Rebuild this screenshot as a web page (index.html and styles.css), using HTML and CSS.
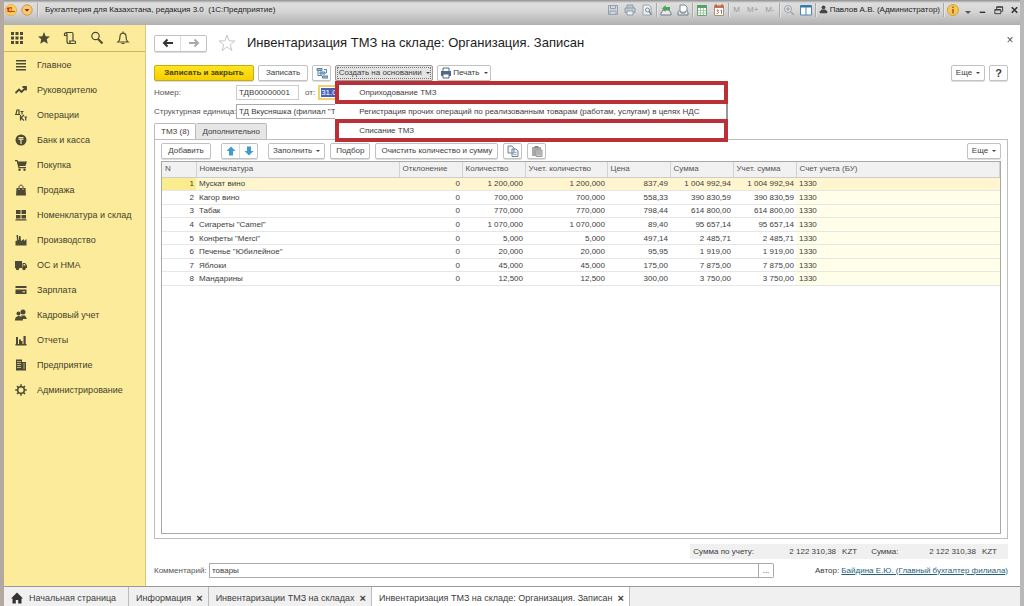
FILE: index.html
```html
<!DOCTYPE html>
<html lang="ru">
<head>
<meta charset="utf-8">
<title>Бухгалтерия для Казахстана</title>
<link rel="stylesheet" href="styles.css">
</head>
<body>
<svg class="defs" aria-hidden="true">
  <symbol id="arrow" viewBox="0 0 12 10"><path d="M11 5H2M5.500 1.500 2 5l3.500 3.500" fill="none" stroke="currentColor" stroke-width="2"/></symbol>
  <symbol id="copy" viewBox="0 0 12 12"><path d="M1 1h4l2 2v5H1zM5 4h4l2 2v5.500H5z" fill="#eef3f6" stroke="#71869a"/><path d="M6.500 7.500h3M6.500 9.500h3" stroke="#9eb0bf"/></symbol>
</svg>
<div class="window">
  <header class="titlebar">
    <svg class="logo" viewBox="0 0 12 12"><circle cx="6" cy="6" r="5.500" fill="#fbd35c" stroke="#e9b040"/><path d="M2 5l1-1v4M7 4.500a2 2 0 1 0-.5 3H10M7 6H5.500" fill="none" stroke="#cf3a20" stroke-width="1.200"/></svg>
    <svg class="logo" viewBox="0 0 12 12"><circle cx="6" cy="6" r="5.200" fill="#fbc877" stroke="#d9953a"/><path d="M3.500 5h5L6 7.800z" fill="#6b4316"/></svg>
    <i class="sep"></i>
    <span class="app-title">Бухгалтерия для Казахстана, редакция 3.0&nbsp; (1С:Предприятие)</span>
    <div class="sys">
      <svg viewBox="0 0 12 12"><path d="M1.500 1.500h9v9h-9zM3.500 1.500v3h5v-3M3 10.500V7h6v3.500" fill="#cfd6de" stroke="#94a0ae"/></svg>
      <svg viewBox="0 0 12 12"><path d="M3 4V1h6v3M1 4h10v4.500H1z" fill="#bfc9d3" stroke="#8f9dab"/><path d="M3 7h6v4H3z" fill="#edf1f4" stroke="#8f9dab"/></svg>
      <svg viewBox="0 0 12 12"><path d="M2 1h6l2 2v8H2z" fill="#eceff2" stroke="#98a3ae"/><circle cx="6.500" cy="6" r="2" fill="none" stroke="#7e8b99"/><path d="M8 7.500l2.500 3" stroke="#7e8b99" stroke-width="1.500"/></svg>
      <i class="sep"></i>
      <svg viewBox="0 0 12 12"><path d="M1 9l2-3h6l2 3v2H1z" fill="#e6e9eb" stroke="#6f7b86"/><path d="M2 4.500L5.500 1v2H10v3H5.500v2z" fill="#49a54f"/></svg>
      <svg viewBox="0 0 12 12"><path d="M3 7V1h5l2 2v4" fill="#fff" stroke="#77889a"/><path d="M1 9c0-3 3-3 3 0h4c0-3 3-3 3 0v2H1z" fill="#e6e9eb" stroke="#6f7b86"/></svg>
      <i class="sep"></i>
      <svg viewBox="0 0 12 12"><path d="M1.500 1.500h9v10h-9z" fill="#fff" stroke="#6aa574"/><path d="M1 1h10v3H1z" fill="#56a361"/><path d="M2 6.500h8M2 9h8M4.500 4v7M7.500 4v7" stroke="#a7c9ac"/></svg>
      <svg viewBox="0 0 12 12"><path d="M1.500 2h9v9.500h-9z" fill="#fff" stroke="#b28b70"/><path d="M1 1.500h10V4H1z" fill="#cf7145"/><path d="M3 0v3M9 0v3" stroke="#8c654b"/><path d="M3.500 6h2L4.500 7.500c2 0 1 2.500-1 2M7.500 6.500l1-.5v4" fill="none" stroke="#666" stroke-width=".8"/></svg>
      <i class="sep"></i>
      <button class="mem">M</button><button class="mem">M+</button><button class="mem">M-</button>
      <i class="sep"></i>
      <svg viewBox="0 0 12 12"><circle cx="5" cy="5" r="3.500" fill="#e2e5e7" stroke="#99a2aa"/><path d="M3 5h4M5 3v4M8 8l3 3" stroke="#99a2aa" stroke-width="1.200"/></svg>
      <svg viewBox="0 0 12 12"><path d="M.5 1.500h11v9.500H.5z" fill="#fff" stroke="#4a87b5"/><path d="M.5 2.500h11" stroke="#2f78b0" stroke-width="2"/><path d="M6 3v8" stroke="#4a87b5"/></svg>
      <i class="sep"></i>
      <span class="user"><svg viewBox="0 0 12 12"><circle cx="6" cy="3" r="2.500" fill="#444"/><path d="M3.500 6h5L11 8.500V11H1V8.500z" fill="#444"/></svg>Павлов А.В. (Администратор)</span>
      <i class="sep"></i>
      <svg viewBox="0 0 12 12"><circle cx="6" cy="6" r="5.500" fill="#f7c653" stroke="#d8a13c"/><path d="M6 5v4.500M6 2.500v1.500" stroke="#8a6420" stroke-width="1.500"/></svg>
      <svg class="tiny" viewBox="0 0 8 12"><path d="M1 7h6L4 10z" fill="#555"/></svg>
      <svg class="win" viewBox="0 0 12 12"><path d="M3 8.500h6" stroke="#333" stroke-width="1.500"/></svg>
      <svg class="win" viewBox="0 0 12 12"><path d="M2 5.500h6.500V10H2zM4 5V2.500h6.500v5H9M4 3h6.500M2 6h6" fill="none" stroke="#333"/></svg>
      <svg class="win" viewBox="0 0 12 12"><path d="M3 3l6 6M9 3l-6 6" stroke="#333" stroke-width="1.800"/></svg>
    </div>
  </header>

  <div class="body">
    <aside class="sidebar">
      <div class="quick">
        <svg viewBox="0 0 14 14"><path d="M1 1h3v3H1zM5.500 1h3v3h-3zM10 1h3v3h-3zM1 5.500h3v3H1zM5.500 5.500h3v3h-3zM10 5.500h3v3h-3zM1 10h3v3H1zM5.500 10h3v3h-3zM10 10h3v3h-3z"/></svg>
        <svg viewBox="0 0 14 14"><path d="M7 1l1.700 4.200 4.300.3-3.300 2.800 1.100 4.500L7 10.400l-3.800 2.400 1.100-4.500L1 5.500l4.300-.3z"/></svg>
        <svg class="line" viewBox="0 0 14 14"><path d="M4 4.500H1.500V3c0-1.500 2.500-1.500 2.500 0v7.500c0 2 2 2 2 2h5.500c1.500 0 1.500-2.500 0-2.500H10V3c0-1.500-1-1.500-1-1.500H3M6 12.500c1.500 0 1.500-2.500 0-2.500h4"/></svg>
        <svg class="line" viewBox="0 0 14 14"><circle cx="5.500" cy="5" r="3.700"/><path d="M8 8l4.500 4.500" stroke-width="2"/></svg>
        <svg class="line" viewBox="0 0 14 14"><path d="M2 11h10c-2-1.500-2-3-2-5.500C10 1 4 1 4 5.500 4 8 4 9.500 2 11zM5.500 12.500h3M7 2V.5"/></svg>
      </div>
      <nav class="menu">
        <a href="#"><svg viewBox="0 0 12 12"><path d="M1 1h10v1.500H1zM1 4h10v1.500H1zM1 7h10v1.500H1zM1 10h10v1.500H1z"/></svg>Главное</a>
        <a href="#"><svg class="line" viewBox="0 0 12 12"><path d="M.5 9l3.500-3.500L6.500 8 11 3.500M7.500 3H11v3.500" stroke-width="1.800"/></svg>Руководителю</a>
        <a href="#"><svg class="line" viewBox="0 0 12 12"><path d="M0 5.500h5M1 5l1-4h2v4M5.500 2.500h3M7 2.500v3M5.500 6v5.500M9 6l-3 3 3 2.500M9.500 8H12M10.700 8v3.500"/></svg>Операции</a>
        <a href="#"><svg viewBox="0 0 12 12"><circle cx="6" cy="6" r="5.500"/><path d="M3.500 3.500h5M3.500 5.200h5M6 5v5" stroke="#fbeb9a" stroke-width="1.200"/></svg>Банк и касса</a>
        <a href="#"><svg viewBox="0 0 12 12"><path d="M0 1h2.500l.5 1.500h9L10.500 7H4.300l.3 1H11v1.200H3.500L1.700 2.200H0z"/><circle cx="4.500" cy="10.700" r="1.200"/><circle cx="9.500" cy="10.700" r="1.200"/></svg>Покупка</a>
        <a href="#"><svg viewBox="0 0 12 12"><path d="M1.500 4h9l.5 7.500H1z"/><path d="M4 6V3c0-2.500 4-2.500 4 0v3" fill="none" stroke="#4c4935"/><path d="M4 4.500V6M8 4.500V6" stroke="#fbeb9a" stroke-width=".8"/></svg>Продажа</a>
        <a href="#"><svg viewBox="0 0 12 12"><path d="M1 1h4.500v4H1zM6.500 1H11v4H6.500zM1 6h4.500v3.500H1zM6.500 6H11v3.500H6.500zM.5 10.200h11v1.300H.5z"/></svg>Номенклатура и склад</a>
        <a href="#"><svg viewBox="0 0 12 12"><path d="M.5 11.500V7L2 6.500 1.500 1H3l.5 5L4 6V2h1.500l.5 5 3-2v2l2.500-2v6.500z"/></svg>Производство</a>
        <a href="#"><svg viewBox="0 0 12 12"><path d="M0 2h7v7H0zM7.500 4h2.700L12 6.500V9H7.500z"/><circle cx="2.500" cy="9.500" r="1.700"/><circle cx="9" cy="9.500" r="1.700"/><path d="M8.500 5h1.200l1 1.500H8.500z" fill="#fbeb9a"/></svg>ОС и НМА</a>
        <a href="#"><svg viewBox="0 0 12 12"><path d="M.5 2h11v2H.5zM.5 5.500h11V10H.5z"/><path d="M7.500 7.800H10" stroke="#fbeb9a"/></svg>Зарплата</a>
        <a href="#"><svg viewBox="0 0 12 12"><circle cx="8" cy="3" r="2.500"/><circle cx="3.500" cy="4.500" r="2"/><path d="M6 6.500h4L12 10H8zM0 11.500C0 7 3 7.500 4 7c3 .5 4 1 4 4.500z"/></svg>Кадровый учет</a>
        <a href="#"><svg viewBox="0 0 12 12"><path d="M1 3h2v7.500H1zM4 5.500h2v5H4zM8.500 2h2.200v8.500H8.500zM6 7h1.500v3.500H6zM.5 10h11v1.500H.5z"/></svg>Отчеты</a>
        <a href="#"><svg viewBox="0 0 12 12"><path d="M1 .5h6V3h4v8.500H1z"/><path d="M2 2.500h4M2 4.500h4M2 6.500h4M2 8.500h4M8 5h2M8 7h2M8 9h2" stroke="#d8ca85" stroke-width=".8"/></svg>Предприятие</a>
        <a href="#"><svg class="line" viewBox="0 0 12 12"><circle cx="6" cy="6" r="3.300" stroke-width="1.500"/><path d="M6 .3v2.200M6 9.500v2.200M.3 6h2.200M9.500 6h2.200M2 2l1.500 1.500M8.500 8.500L10 10M10 2L8.500 3.500M3.500 8.500L2 10" stroke-width="1.500"/></svg>Администрирование</a>
      </nav>
    </aside>

    <main class="form">
      <div class="heading">
        <div class="pair nav"><button aria-label="Назад"><svg><use href="#arrow"/></svg></button><button class="fwd" aria-label="Вперед"><svg><use href="#arrow"/></svg></button></div>
        <svg class="star" viewBox="0 0 18 18"><path d="M9 1l2 5.800 6 .2-4.800 3.700L14 16.500 9 13l-5 3.500 1.800-5.800L1 7l6-.2z" fill="#fff" stroke="#c3c8cd"/></svg>
        <h1>Инвентаризация ТМЗ на складе: Организация. Записан</h1>
        <button class="close" aria-label="Закрыть">×</button>
      </div>

      <div class="commands">
        <button class="btn primary">Записать и закрыть</button>
        <button class="btn">Записать</button>
        <button class="btn icon" aria-label="Структура"><svg viewBox="0 0 12 12"><path d="M1 1.500h5v2H1zM4 5h5v2H4zM6.500 9H12v2H6.500z" fill="#a9c7dc" stroke="#4f7fa5"/><path d="M2 4v4.500h4M8 2.500h2.500V6" fill="none" stroke="#4f7fa5"/></svg></button>
        <div class="dropdown">
          <button class="btn pressed">Создать на основании<i class="caret"></i></button>
          <div class="popup">
            <button class="marked">Оприходование ТМЗ</button>
            <button>Регистрация прочих операций по реализованным товарам (работам, услугам) в целях НДС</button>
            <button class="marked">Списание ТМЗ</button>
          </div>
        </div>
        <button class="btn print"><svg viewBox="0 0 12 12"><path d="M3 4V1h6v3" fill="#fff" stroke="#4e6b85"/><path d="M1 4h10v5H1z" fill="#4e6b85"/><path d="M3 7h6v4H3z" fill="#fff" stroke="#4e6b85"/></svg>Печать<i class="caret"></i></button>
        <button class="btn more push">Еще<i class="caret"></i></button>
        <button class="btn icon help">?</button>
      </div>

      <div class="fields">
        <label for="num">Номер:</label>
        <div class="line-fields"><input id="num" class="number" value="ТДВ00000001"><label for="date">от:</label><input id="date" class="date" value="31.0"></div>
        <label for="unit">Структурная единица:</label>
        <input id="unit" class="unit" value="ТД Вкусняшка (филиал &quot;Т,">
      </div>

      <div class="tabs"><button class="tab active">ТМЗ (8)</button><button class="tab">Дополнительно</button></div>

      <section class="panel">
        <div class="tools">
          <button class="btn add">Добавить</button>
          <div class="pair move"><button aria-label="Вверх"><svg viewBox="0 0 10 10"><path d="M5 .5L9.500 5H7v4.500H3V5H.5z" fill="#3f9bd2"/></svg></button><button aria-label="Вниз"><svg viewBox="0 0 10 10"><path d="M5 9.500L.5 5H3V.5h4V5h2.500z" fill="#3f9bd2"/></svg></button></div>
          <button class="btn fill">Заполнить<i class="caret"></i></button>
          <button class="btn pick">Подбор</button>
          <button class="btn clear">Очистить количество и сумму</button>
          <button class="btn icon" aria-label="Копировать"><svg><use href="#copy"/></svg></button>
          <button class="btn icon" aria-label="Вставить"><svg viewBox="0 0 12 12"><path d="M1 2h9v9H1z" fill="#aaa"/><path d="M3.500 1h4v2h-4z" fill="#888"/><path d="M5 5h6v6.500H5z" fill="#ccc" stroke="#999"/><path d="M6 7h4M6 9h4" stroke="#999"/></svg></button>
          <button class="btn more push">Еще<i class="caret"></i></button>
        </div>
        <div class="grid">
          <table>
            <colgroup><col class="c-n"><col class="c-name"><col class="c-mid"><col class="c-mid"><col class="c-wide"><col class="c-mid"><col class="c-mid"><col class="c-mid"><col></colgroup>
            <thead><tr><th>N</th><th>Номенклатура</th><th>Отклонение</th><th>Количество</th><th>Учет. количество</th><th>Цена</th><th>Сумма</th><th>Учет. сумма</th><th>Счет учета (БУ)</th></tr></thead>
            <tbody>
              <tr class="current"><td>1</td><td>Мускат вино</td><td>0</td><td>1 200,000</td><td>1 200,000</td><td>837,49</td><td>1 004 992,94</td><td>1 004 992,94</td><td>1330</td></tr>
              <tr><td>2</td><td>Кагор вино</td><td>0</td><td>700,000</td><td>700,000</td><td>558,33</td><td>390 830,59</td><td>390 830,59</td><td>1330</td></tr>
              <tr><td>3</td><td>Табак</td><td>0</td><td>770,000</td><td>770,000</td><td>798,44</td><td>614 800,00</td><td>614 800,00</td><td>1330</td></tr>
              <tr><td>4</td><td>Сигареты "Camel"</td><td>0</td><td>1 070,000</td><td>1 070,000</td><td>89,40</td><td>95 657,14</td><td>95 657,14</td><td>1330</td></tr>
              <tr><td>5</td><td>Конфеты "Merci"</td><td>0</td><td>5,000</td><td>5,000</td><td>497,14</td><td>2 485,71</td><td>2 485,71</td><td>1330</td></tr>
              <tr><td>6</td><td>Печенье "Юбилейное"</td><td>0</td><td>20,000</td><td>20,000</td><td>95,95</td><td>1 919,00</td><td>1 919,00</td><td>1330</td></tr>
              <tr><td>7</td><td>Яблоки</td><td>0</td><td>45,000</td><td>45,000</td><td>175,00</td><td>7 875,00</td><td>7 875,00</td><td>1330</td></tr>
              <tr><td>8</td><td>Мандарины</td><td>0</td><td>12,500</td><td>12,500</td><td>300,00</td><td>3 750,00</td><td>3 750,00</td><td>1330</td></tr>
            </tbody>
          </table>
        </div>
      </section>

      <div class="totals"><span>Сумма по учету:</span><b>2 122 310,38</b><b>KZT</b><span class="second">Сумма:</span><b>2 122 310,38</b><b>KZT</b></div>

      <div class="footer">
        <label for="comment">Комментарий:</label>
        <input id="comment" value="товары"><button class="dots">...</button>
        <span class="author">Автор: <a href="#">Байдина Е.Ю. (Главный бухгалтер филиала)</a></span>
      </div>
    </main>
  </div>

  <nav class="taskbar">
    <a class="home" href="#"><svg viewBox="0 0 12 12"><path d="M6 .5L12 6.500h-1.500v5H7.200V8H4.800v3.500H1.500v-5H0z" fill="#333"/></svg>Начальная страница</a>
    <a href="#">Информация<b>×</b></a>
    <a href="#">Инвентаризации ТМЗ на складах<b>×</b></a>
    <a class="open" href="#">Инвентаризация ТМЗ на складе: Организация. Записан<b>×</b></a>
  </nav>
</div>
</body>
</html>
```
FILE: styles.css
```css
* { box-sizing: border-box; }
body { margin: 0; font: 8px/12px "Liberation Sans", Arial, sans-serif; color: #3d3d3d; background: #fff; }
button, input { font: inherit; color: inherit; margin: 0; padding: 0; }
button { background: none; border: 0; white-space: nowrap; }
a { color: inherit; text-decoration: none; }
svg { width: 12px; height: 12px; flex: none; }
.defs { display: none; }
.window { min-height: 100vh; display: flex; flex-direction: column; border-left: 4px solid #b3a9a0; border-right: 4px solid #b8b8b8; background: #f0f0f0; }

.titlebar { height: 25px; padding: 0 0 6px 1px; display: flex; align-items: center; gap: 4px; background: linear-gradient(#8e8e8e, #dedede 12%, #d6d6d6 45%, #b0b0b0); }
.sep { width: 1px; height: 14px; background: #aaa; box-shadow: 1px 0 #e4e4e4; }
.app-title { padding-left: 2px; color: #222; white-space: nowrap; }
.logo + .sep { margin-right: 1px; }
.sys { margin-left: auto; display: flex; align-items: center; gap: 5px; }
.sys .sep { margin: 0 -2px; }
.sys .tiny { width: 8px; }
.sys .win { width: 11px; }
.mem { padding: 0 1px; color: #999; }
.user { display: flex; align-items: center; gap: 2px; color: #222; white-space: nowrap; }
.user svg { width: 9px; height: 9px; }

.body { flex: 1; display: flex; }
.sidebar { width: 142px; background: #fbeb9a; border-right: 1px solid #d9c97c; }
.sidebar svg { fill: #4c4935; }
.sidebar .line { fill: none; stroke: #4c4935; stroke-width: 1.2; }
.quick { height: 27px; padding: 0 15px 0 6px; display: flex; align-items: center; justify-content: space-between; border-bottom: 1px solid #c9b85c; }
.quick svg { width: 14px; height: 14px; }
.menu { font-size: 9px; color: #45422f; }
.menu a { height: 25px; padding-left: 11px; display: flex; align-items: center; gap: 10px; white-space: nowrap; }

.form { flex: 1; min-width: 0; padding: 0 12px 8px 8px; background: #fff; display: flex; flex-direction: column; }
.heading { height: 36px; display: flex; align-items: center; gap: 11px; }
.heading h1 { margin: 0; font-size: 13px; line-height: 16px; font-weight: normal; color: #1c1c1c; white-space: nowrap; }
.star { width: 18px; height: 18px; }
.close { margin-left: auto; align-self: flex-start; height: 30px; width: 12px; margin-right: -8px; font-size: 12px; color: #555; }
.pair { display: flex; border: 1px solid #c2c2c2; border-radius: 2px; box-shadow: 0 1px #ddd; }
.pair button { flex: 1; display: flex; align-items: center; justify-content: center; }
.pair button + button { border-left: 1px solid #ddd; }
.nav { width: 53px; height: 17px; }
.nav svg { width: 12px; height: 10px; color: #333; }
.nav .fwd svg { transform: scaleX(-1); color: #aaa; }

.commands, .tools { display: flex; align-items: center; }
.commands { height: 24px; gap: 4px; }
.btn { height: 16px; min-width: 19px; padding: 0 7px; display: inline-flex; align-items: center; justify-content: center; border: 1px solid #c2c2c2; border-radius: 2px; background: #fff; box-shadow: 0 1px #ddd; }
.btn.icon { padding: 0; width: 19px; }
.btn.primary { min-width: 100px; font-weight: bold; background: linear-gradient(#ffe51f, #f5d000); border-color: #c9aa12; color: #4a4000; }
.btn.pressed { width: 98px; padding: 0 2px; background: #e4e4e4; border-color: #999; outline: 1px dotted #777; outline-offset: -3px; }
.caret { margin-left: 4px; border: 2px solid transparent; border-top-color: #444; border-bottom: 0; }
.btn.print { padding: 0 2px; gap: 1px; }
.btn.more { width: 34px; padding: 0; }
.push { margin-left: auto; }
.help { font-size: 11px; font-weight: bold; }
.dropdown { position: relative; }
.popup { position: absolute; z-index: 2; top: 16px; left: 0; width: 393px; display: flex; flex-direction: column; background: #fff; border-right: 2px solid #999; }
.popup button { height: 15px; padding: 0 24px; text-align: left; }
.popup .marked { height: 23px; padding: 0 20px; margin-right: -2px; border: 4px solid #bb2f36; }

.fields { display: grid; grid-template-columns: 82px 1fr; row-gap: 4px; align-items: center; white-space: nowrap; }
.line-fields { display: flex; align-items: center; }
.fields label { color: #555; }
input { height: 15px; padding: 0 2px; border: 1px solid #aaa; background: #fff; }
.number { width: 63px; margin-right: 6px; border-color: #ccc; }
.date { width: 90px; margin-left: 3px; padding: 1px; border: 2px solid #eed568; background: #4763b8 content-box; color: #fff; }
.unit { width: 180px; }

.tabs { display: flex; align-items: flex-end; padding-top: 4px; margin-bottom: -1px; }
.tab { height: 17px; padding: 0 6px; border: 1px solid #bbb; border-radius: 2px 2px 0 0; background: #e6e6e6; }
.tab.active { background: #fff; border-bottom-color: #fff; }
.tab + .tab { border-left: 0; }

.panel { flex: 1; display: flex; flex-direction: column; padding: 3px 6px 4px; border: 1px solid #bdbdbd; }
.tools { height: 16px; margin-bottom: 2px; gap: 5px; }
.tools .btn { padding: 0 5px; }
.tools .btn.add { min-width: 50px; }
.tools .btn.fill { padding: 0 4px; }
.tools .btn.icon, .tools .btn.more { padding: 0; }
.move { width: 37px; height: 16px; margin: 0 5px; }
.move svg { width: 10px; height: 10px; }
.grid { flex: 1; border: 1px solid #a8a8a8; }
table { width: 100%; height: 124px; border-collapse: collapse; table-layout: fixed; white-space: nowrap; }
.c-n { width: 34px; }
.c-name { width: 203px; }
.c-mid { width: 63px; }
.c-wide { width: 82px; }
th { height: 15px; padding: 0 3px; text-align: left; font-weight: normal; color: #555; background: #f1f1f1; border-right: 1px solid #d2d2d2; border-bottom: 1px solid #ccc; }
td { padding: 0 2px; line-height: 11px; text-align: right; border-bottom: 1px solid #e6e6e6; }
td:nth-child(2), td:last-child { text-align: left; padding-left: 3px; }
td:last-child { background: #fffee8; }
.current td, .current td:last-child { background: #fff6d0; }
.current td:first-child { background: #fcec90; }

.totals { align-self: flex-end; height: 15px; margin-top: 5px; padding: 0 11px 0 3px; display: flex; align-items: center; gap: 6px; background: #f0f0f0; }
.totals b { font-weight: normal; }
.totals span { width: 90px; }
.totals .second { width: 60px; padding-left: 8px; }
.footer { margin-top: 4px; display: flex; align-items: center; white-space: nowrap; }
.footer label { width: 55px; color: #555; }
.footer input { flex: 1; }
.dots { width: 15px; height: 15px; border: 1px solid #aaa; border-left: 0; border-radius: 0 2px 2px 0; }
.author { width: 234px; text-align: right; }
.author a { color: #245f7d; text-decoration: underline; }

.taskbar { height: 20px; display: flex; border-top: 1px solid #999; font-size: 9px; background: #f0f0f0; }
.taskbar a { padding: 2px 5px 0 7px; display: flex; align-items: center; gap: 5px; border-right: 1px solid #bbb; white-space: nowrap; }
.taskbar b { font-size: 11px; }
.taskbar .home { gap: 6px; padding-right: 12px; }
.taskbar .open { background: #fff; }
```
